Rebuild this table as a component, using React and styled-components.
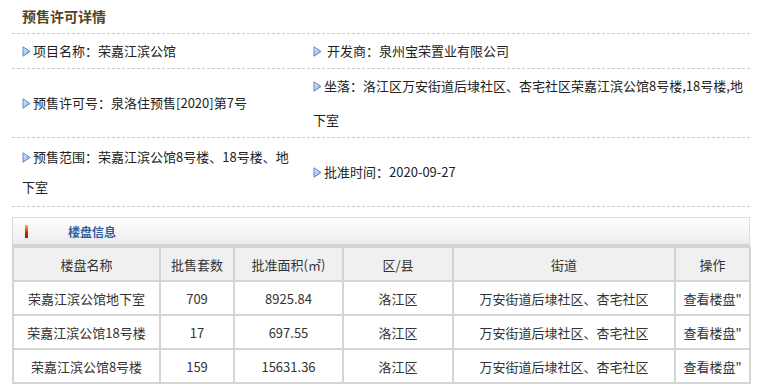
import React from "react";
import styled, { createGlobalStyle } from "styled-components";

const GlobalStyle = createGlobalStyle`
  body {
    margin: 0;
    background: #fff;
    font-family: "Noto Sans CJK SC", "Liberation Sans", sans-serif;
  }
`;

const info = [
  {
    left: { label: "项目名称", value: "荣嘉江滨公馆" },
    right: { label: " 开发商", value: "泉州宝荣置业有限公司" },
    height: 35,
  },
  {
    left: { label: "预售许可号", value: "泉洛住预售[2020]第7号" },
    right: {
      label: "坐落",
      value: "洛江区万安街道后埭社区、杏宅社区荣嘉江滨公馆8号楼,18号楼,地下室",
    },
    height: 69,
  },
  {
    left: { label: "预售范围", value: "荣嘉江滨公馆8号楼、18号楼、地下室", lh: 30 },
    right: { label: "批准时间", value: "2020-09-27" },
    height: 69,
  },
];

const columns = [
  { name: "楼盘名称", width: 147 },
  { name: "批售套数", width: 74 },
  { name: "批准面积(㎡)", width: 109 },
  { name: "区/县", width: 110 },
  { name: "街道", width: 222 },
  { name: "操作", width: 75 },
];

const rows = [
  ["荣嘉江滨公馆地下室", "709", "8925.84", "洛江区", "万安街道后埭社区、杏宅社区"],
  ["荣嘉江滨公馆18号楼", "17", "697.55", "洛江区", "万安街道后埭社区、杏宅社区"],
  ["荣嘉江滨公馆8号楼", "159", "15631.36", "洛江区", "万安街道后埭社区、杏宅社区"],
];

function Arrow() {
  return (
    <ArrowIcon width="9" height="11" viewBox="0 0 9 11">
      <defs>
        <linearGradient id="ag" x1="0" y1="0" x2="1" y2="1">
          <stop offset="0" stopColor="#e4eefb" />
          <stop offset="1" stopColor="#7fa6dc" />
        </linearGradient>
      </defs>
      <path d="M1 0.8 L8 5.5 L1 10.2 Z" fill="url(#ag)" stroke="#5a86c6" strokeWidth="1" />
    </ArrowIcon>
  );
}

function App() {
  return (
    <Page>
      <GlobalStyle />
      <Title>预售许可详情</Title>
      {info.map((row, i) => (
        <InfoRow key={i} $h={row.height}>
          <InfoCell $lh={row.left.lh} $pad={10}>
            <Arrow />
            {row.left.label}：{row.left.value}
          </InfoCell>
          <InfoCell $lh={row.right.lh} $pad={19}>
            <Arrow />
            {row.right.label}：{row.right.value}
          </InfoCell>
        </InfoRow>
      ))}
      <Panel>
        <PanelHead>
          <Marker />
          <PanelTitle>楼盘信息</PanelTitle>
        </PanelHead>
        <Table>
          <colgroup>
            {columns.map((c) => (
              <col key={c.name} style={{ width: c.width }} />
            ))}
          </colgroup>
          <thead>
            <tr>
              {columns.map((c) => (
                <Th key={c.name}>{c.name}</Th>
              ))}
            </tr>
          </thead>
          <tbody>
            {rows.map((r, i) => (
              <tr key={i}>
                {r.map((v, j) => (
                  <Td key={j}>{v}</Td>
                ))}
                <Td>查看楼盘"</Td>
              </tr>
            ))}
          </tbody>
        </Table>
      </Panel>
    </Page>
  );
}

export default App;

const Page = styled.div`
  width: 761px;
  padding: 0 11px 0 12px;
  box-sizing: border-box;
  color: #222;
`;

const Title = styled.h2`
  margin: 0;
  height: 33px;
  line-height: 32px;
  padding-left: 10px;
  font-size: 14px;
  font-weight: bold;
  color: #56431f;
  border-bottom: 1px dashed #c8c8c8;
`;

const InfoRow = styled.div`
  display: grid;
  grid-template-columns: 282px 1fr;
  min-height: ${(p) => p.$h}px;
  align-items: center;
  border-bottom: 1px dashed #c8c8c8;
  box-sizing: border-box;
`;

const InfoCell = styled.div`
  padding-left: ${(p) => p.$pad}px;
  font-size: 13px;
  line-height: ${(p) => p.$lh || 34}px;
  color: #222;
  word-break: break-all;
`;

const ArrowIcon = styled.svg`
  display: inline-block;
  vertical-align: -1px;
  margin-right: 2px;
`;

const Panel = styled.div`
  margin-top: 10px;
  width: 738px;
`;

const PanelHead = styled.div`
  display: flex;
  align-items: center;
  height: 26px;
  border: 1px solid #dcdcdc;
  border-bottom: 2px solid #d2d2d2;
  background: linear-gradient(#ffffff, #ececec);
`;

const Marker = styled.span`
  width: 3px;
  height: 13px;
  margin-left: 12px;
  background: linear-gradient(#f0c020, #d02010 60%, #b01008);
`;

const PanelTitle = styled.span`
  margin-left: 40px;
  font-size: 12px;
  font-weight: bold;
  color: #2d5ea8;
`;

const Table = styled.table`
  width: 738px;
  table-layout: fixed;
  border-collapse: collapse;
  border: 2px solid #d4d4d4;
  border-top: none;
  font-family: "Noto Sans CJK SC", "Liberation Sans", sans-serif;
  font-size: 13px;
  color: #333;
`;

const Th = styled.th`
  height: 32px;
  padding: 0;
  font-weight: normal;
  background: #f0f0f0;
  border: 2px solid #d4d4d4;
  text-align: center;
`;

const Td = styled.td`
  height: 32px;
  padding: 0;
  border: 2px solid #d4d4d4;
  text-align: center;
  white-space: nowrap;
`;
